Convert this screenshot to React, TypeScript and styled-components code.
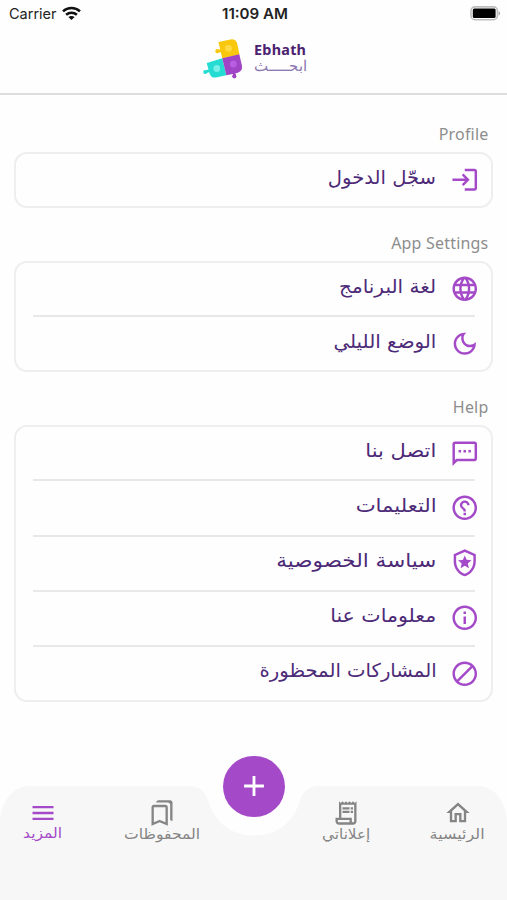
import React from "react";
import styled, { createGlobalStyle } from "styled-components";
import type { IconType } from "react-icons";
import {
  MdAdd,
  MdBlock,
  MdLanguage,
  MdLogin,
  MdMenu,
  MdOutlineBookmarks,
  MdOutlineDarkMode,
  MdOutlineHelpOutline,
  MdOutlineHome,
  MdOutlineInfo,
  MdOutlineLocalPolice,
  MdOutlineReceiptLong,
  MdOutlineSms,
} from "react-icons/md";

const purple = "#a44ac8";
const ink = "#4d2a78";
const line = "#e8e8e8";
const arabic = '"DejaVu Sans", "Noto Sans", sans-serif';

const GlobalStyle = createGlobalStyle`
  * { box-sizing: border-box; }
  body { margin: 0; background: #fefefe; }
`;

const Screen = styled.div`
  width: 507px;
  height: 900px;
  display: flex;
  flex-direction: column;
  overflow: hidden;
  background: #fefefe;
  font-family: "Noto Sans", sans-serif;
`;

const StatusBar = styled.div`
  height: 28px;
  flex: none;
  display: grid;
  grid-template-columns: 1fr auto 1fr;
  align-items: center;
  padding: 0 6px 1px 9px;
  font-family: Inter, sans-serif;
  font-size: 14.5px;
  color: #222;
`;

const Carrier = styled.div`
  display: flex;
  align-items: center;
  gap: 5px;
`;

const Clock = styled.div`
  font-size: 15.1px;
  font-weight: 600;
`;

const BatteryIcon = styled.svg`
  justify-self: end;
`;

const Header = styled.header`
  height: 67px;
  flex: none;
  display: flex;
  justify-content: center;
  gap: 11px;
  padding: 10px 0 0 4px;
  border-bottom: 2px solid #dedede;
`;

const BrandText = styled.div`
  display: flex;
  flex-direction: column;
  width: 54px;
  padding-top: 3px;
`;

const BrandName = styled.div`
  height: 17px;
  font-size: 14.4px;
  font-weight: 700;
  line-height: 17px;
  letter-spacing: 0.25px;
  color: #4b2170;
`;

const BrandArabic = styled.div`
  font-family: ${arabic};
  font-size: 14.6px;
  font-weight: 200;
  line-height: 16px;
  white-space: nowrap;
  color: #8c79b0;
`;

const Content = styled.main`
  flex: 1;
  display: flex;
  flex-direction: column;
  padding: 20.6px 14px 0 14px;
`;

const SectionTitle = styled.h2`
  height: 36px;
  margin: 0;
  padding: 0 4.5px 0 0;
  font-size: 16px;
  font-weight: 400;
  line-height: 36px;
  letter-spacing: 0.2px;
  text-align: right;
  color: #8d8d8d;
`;

const Card = styled.section`
  margin-bottom: 17.4px;
  padding: 0 16px 0 17px;
  border: 2px solid #eeeeee;
  border-radius: 13px;
`;

const Row = styled.div`
  height: 55.1px;
  display: flex;
  justify-content: flex-end;
  align-items: center;
  gap: 14px;
  &:first-child { height: 52px; }
  & + & { border-top: 2px solid ${line}; }
  svg {
    width: 29.5px;
    height: 29.5px;
    margin-right: -4.8px;
    flex: none;
    color: ${purple};
  }
`;

const RowLabel = styled.span<{ $stretch: number }>`
  direction: rtl;
  padding-bottom: 6px;
  font-family: ${arabic};
  font-size: 19px;
  line-height: 26px;
  white-space: nowrap;
  color: ${ink};
  transform: scaleX(${(p) => p.$stretch});
  transform-origin: right center;
`;

const MirroredIcon = styled(MdOutlineHelpOutline)`
  transform: scaleX(-1);
`;

const Footer = styled.footer`
  position: relative;
  height: 114px;
  flex: none;
`;

const TabBar = styled.nav`
  height: 100%;
  display: grid;
  grid-template-columns: 85px 154px 29px 156px 67px;
  align-items: start;
  background: #f7f7f7;
  clip-path: path("M0 114V36C1 15 13 0 29 0H188C199 0 204 4 208 14C214 36 231 49.500 254 49.500C277 49.500 294 36 300 14C304 4 309 0 320 0H478C494 0 506 15 507 36V114Z");
`;

const Tab = styled.div<{ $active?: boolean; $column: number }>`
  grid-column: ${(p) => p.$column};
  display: flex;
  flex-direction: column;
  align-items: center;
  padding-top: 13px;
  color: ${(p) => (p.$active ? purple : "#858585")};
  svg { width: 28px; height: 28px; }
`;

const TabLabel = styled.span<{ $stretch: number; $active?: boolean }>`
  direction: rtl;
  margin-top: ${(p) => (p.$active ? "-3px" : "-2px")};
  font-family: ${arabic};
  font-size: 14px;
  line-height: 18px;
  white-space: nowrap;
  transform: scaleX(${(p) => p.$stretch});
`;

const AddButton = styled.button`
  position: absolute;
  top: -30.5px;
  left: 223px;
  width: 61.5px;
  height: 61.5px;
  display: grid;
  place-items: center;
  padding: 0;
  border: 0;
  border-radius: 50%;
  background: ${purple};
  color: #fff;
  svg { width: 34px; height: 34px; }
`;

function Wifi() {
  return (
    <svg width="19" height="15" viewBox="0 0 19 15" fill="none" stroke="#111" strokeWidth="2.5">
      <path d="M1 5.300C5.800.9 13.200.9 18 5.300" />
      <path d="M4.100 8.800C7.200 6 11.800 6 14.900 8.800" />
      <path d="M9.500 14 6.400 11C8.200 9.500 10.800 9.500 12.600 11Z" fill="#111" stroke="none" />
    </svg>
  );
}

function Battery() {
  return (
    <BatteryIcon width="31" height="15" viewBox="0 0 31 15">
      <rect x="1" y=".9" width="26.400" height="12.800" rx="4" fill="#fff" stroke="#bdbdbd" strokeWidth="1.600" />
      <rect x="2.800" y="2.600" width="22.800" height="9.400" rx="1.500" fill="#000" />
      <path d="M28.600 5.200c2 .6 2 3.700 0 4.300z" fill="#aaa" />
    </BatteryIcon>
  );
}

function Logo() {
  return (
    <svg width="40" height="41" viewBox="0 0 40 41">
      <path d="M15.300 4 27.500 1.400Q33 .5 34.300 6L36.500 16.400 19.300 20.400 17.900 14.200 15.600 14.600 15 11.800 17.200 11.300Z" fill="#f9c80e" />
      <circle cx="14.400" cy="13.200" r="2.100" fill="#f9c80e" />
      <path d="M3.700 25 19.300 20.300 23.300 37.300 13 39.400Q8.500 40.300 7 36.500L6.200 34.300 3.500 34.900 3 32.300 5.500 31.500Z" fill="#25dcd2" />
      <circle cx="2.300" cy="34" r="2.100" fill="#25dcd2" />
      <path d="M19.300 20.300 36.300 16.300 38.900 27.500Q40 33 34.800 34.700L32.500 35.300 33 37.500 30.400 38 29.800 35.900 23.300 37.300Z" fill="#a045c5" />
      <circle cx="31.300" cy="38.300" r="2.100" fill="#a045c5" />
      <circle cx="25.500" cy="10.300" r="3.400" fill="#ffda45" />
      <circle cx="13.800" cy="30.500" r="3.400" fill="#77eee8" />
      <circle cx="30.300" cy="26" r="3.400" fill="#b75ee5" />
    </svg>
  );
}

type Item = { label: string; stretch: number; Icon: IconType | typeof MirroredIcon };

const sections: { title: string; items: Item[] }[] = [
  { title: "Profile", items: [{ label: "سجّل الدخول", stretch: 1.03, Icon: MdLogin }] },
  {
    title: "App Settings",
    items: [
      { label: "لغة البرنامج", stretch: 1.054, Icon: MdLanguage },
      { label: "الوضع الليلي", stretch: 1.047, Icon: MdOutlineDarkMode },
    ],
  },
  {
    title: "Help",
    items: [
      { label: "اتصل بنا", stretch: 1.105, Icon: MdOutlineSms },
      { label: "التعليمات", stretch: 1.115, Icon: MirroredIcon },
      { label: "سياسة الخصوصية", stretch: 1.133, Icon: MdOutlineLocalPolice },
      { label: "معلومات عنا", stretch: 1.08, Icon: MdOutlineInfo },
      { label: "المشاركات المحظورة", stretch: 1.032, Icon: MdBlock },
    ],
  },
];

const tabs = [
  { label: "المزيد", stretch: 1.11, column: 1, Icon: MdMenu, active: true },
  { label: "المحفوظات", stretch: 1.115, column: 2, Icon: MdOutlineBookmarks },
  { label: "إعلاناتي", stretch: 1.085, column: 4, Icon: MdOutlineReceiptLong },
  { label: "الرئيسية", stretch: 1.14, column: 5, Icon: MdOutlineHome },
];

export default function App() {
  return (
    <Screen>
      <GlobalStyle />
      <StatusBar>
        <Carrier>Carrier <Wifi /></Carrier>
        <Clock>11:09 AM</Clock>
        <Battery />
      </StatusBar>
      <Header>
        <Logo />
        <BrandText>
          <BrandName>Ebhath</BrandName>
          <BrandArabic>ابحـــــث</BrandArabic>
        </BrandText>
      </Header>
      <Content>
        {sections.map(({ title, items }) => (
          <React.Fragment key={title}>
            <SectionTitle>{title}</SectionTitle>
            <Card>
              {items.map(({ label, stretch, Icon }) => (
                <Row key={label}>
                  <RowLabel $stretch={stretch}>{label}</RowLabel>
                  <Icon />
                </Row>
              ))}
            </Card>
          </React.Fragment>
        ))}
      </Content>
      <Footer>
        <TabBar>
          {tabs.map(({ label, stretch, column, Icon, active }) => (
            <Tab key={label} $active={active} $column={column}>
              <Icon />
              <TabLabel $stretch={stretch} $active={active}>{label}</TabLabel>
            </Tab>
          ))}
        </TabBar>
        <AddButton aria-label="Add"><MdAdd /></AddButton>
      </Footer>
    </Screen>
  );
}
